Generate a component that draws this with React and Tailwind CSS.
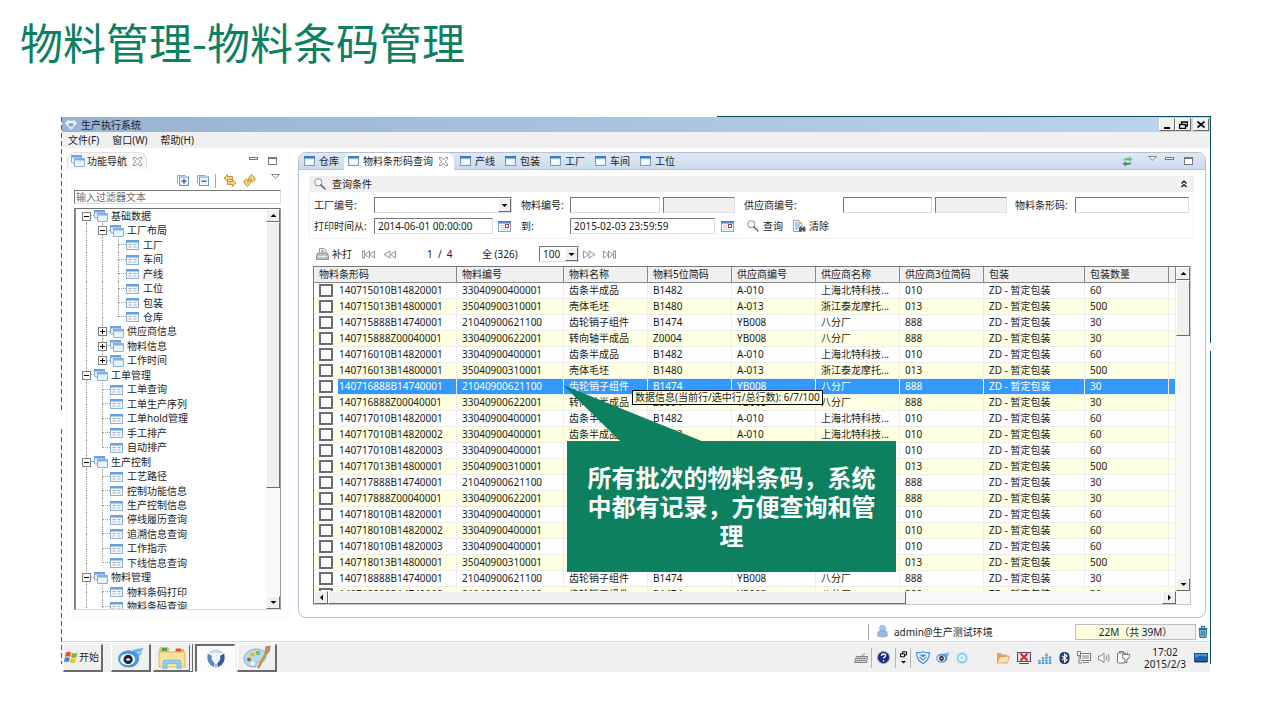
import React from "react";

const bevel =
  "border border-t-white border-l-white border-r-[#6b6b6b] border-b-[#6b6b6b] bg-[#f0f0f0]";
const sunken =
  "border border-t-[#777777] border-l-[#777777] border-r-[#dcdcdc] border-b-[#dcdcdc]";

/* ---------- icons ---------- */

const WindowIcon = () => (
  <svg width="11" height="10" viewBox="0 0 11 10" className="shrink-0">
    <rect x="0.5" y="0.5" width="10" height="9" fill="#e4f1fb" stroke="#7d9bbd" />
    <rect x="0" y="0" width="11" height="2.5" fill="#3f7ab8" />
    <rect x="2" y="4" width="7" height="4" fill="#f6fbff" />
  </svg>
);

const FolderIcon = () => (
  <svg width="14" height="12" viewBox="0 0 14 12" className="shrink-0">
    <rect x="0.5" y="0.5" width="10" height="7.5" rx="0.5" fill="#e6f1fb" stroke="#86afdb" />
    <rect x="0" y="0" width="11" height="2.5" fill="#6ea2dc" />
    <rect x="3.5" y="3.5" width="10" height="8" rx="0.5" fill="#eaf4fd" stroke="#86afdb" />
    <rect x="3" y="3" width="11" height="2.5" fill="#7fb0e6" />
  </svg>
);

const TableIcon = () => (
  <svg width="14" height="10" viewBox="0 0 14 10" className="shrink-0">
    <rect x="0.5" y="0.5" width="12" height="9" fill="#f4f8fc" stroke="#8fb1d8" />
    <rect x="0" y="0" width="13" height="2.5" fill="#68a0e0" />
    <path d="M2.5 4.5h3M7.5 4.5h3M2.5 7h3M7.5 7h3" stroke="#9fb0c3" strokeWidth="1.2" />
  </svg>
);

const CloseMark = () => (
  <svg width="9" height="9" viewBox="0 0 9 9">
    <path
      d="M0.5 0.5h2l2 2.3 2-2.3h2v1.6L6 4.5l2.5 2.4v1.6h-2l-2-2.3-2 2.3h-2V6.9L3 4.5 0.5 2.1z"
      fill="#ffffff"
      stroke="#777777"
      strokeWidth="0.8"
    />
  </svg>
);

const MinMark = () => (
  <svg width="9" height="4" viewBox="0 0 9 4">
    <rect x="0.5" y="0.5" width="8" height="2" fill="#fff" stroke="#777" />
  </svg>
);
const MaxMark = () => (
  <svg width="9" height="8" viewBox="0 0 9 8">
    <rect x="0.5" y="0.5" width="8" height="7" fill="#fff" stroke="#777" />
    <path d="M0 1.5h9" stroke="#777" />
  </svg>
);
const MenuMark = () => (
  <svg width="9" height="5" viewBox="0 0 9 5">
    <path d="M0.5 0.5h8L4.5 4.2z" fill="#fff" stroke="#777" strokeWidth="0.9" />
  </svg>
);

const ARROWS = {
  up: "M0.5 4h6L3.500 1z",
  down: "M0.5 1h6L3.500 4z",
  left: "M5 -0.500v6L2 2.500z",
  right: "M2 -0.500v6L5 2.500z",
};
const Arrow = ({ dir }) => (
  <svg width="7" height="5" viewBox="0 0 7 5" overflow="visible">
    <path d={ARROWS[dir]} fill="#000" />
  </svg>
);

const SearchIcon = () => (
  <svg width="12" height="12" viewBox="0 0 12 12" className="shrink-0">
    <circle cx="4.3" cy="4.3" r="3.5" fill="#f4f9fd" stroke="#959ba1" strokeWidth="1.1" />
    <path d="M7 7l4 4" stroke="#5c5c5c" strokeWidth="1.5" strokeLinecap="round" />
  </svg>
);

const CalendarIcon = () => (
  <svg width="13" height="11" viewBox="0 0 13 11">
    <rect x="0.5" y="0.5" width="12" height="10" fill="#f2f7fc" stroke="#87a5cb" />
    <rect x="0" y="0" width="13" height="2.5" fill="#4e86cc" />
    <path d="M2 4.5h4M2 6.500h4M2 8.500h8" stroke="#c4d4e6" strokeWidth="0.9" />
    <rect x="7.5" y="3.5" width="3" height="3" fill="#fff" stroke="#9c4a42" />
  </svg>
);

const ClearIcon = () => (
  <svg width="13" height="12" viewBox="0 0 13 12">
    <path d="M0.5 0.5h5.5l3 3v8H0.5z" fill="#f4f8fd" stroke="#8fa5c3" />
    <path d="M2 3h3M2 5h5M2 7h4M2 9h3" stroke="#6fa0d8" />
    <path d="M6 0.5v3h3" fill="#f2d27c" stroke="#c29a3c" strokeWidth="0.7" />
    <path d="M6 11.5V8l1-1.5h1.5V8h1.5V6.5h1.500l1 1.500v3.500h-2.500V10H9v1.500z" fill="#555" />
  </svg>
);

const PrinterIcon = () => (
  <svg width="13" height="12" viewBox="0 0 13 12">
    <path d="M3.5 5V0.5h5L10 2v3" fill="#f4f4f4" stroke="#9a9a9a" />
    <path d="M5 2.5h2.500M5 4h3" stroke="#9a9a9a" />
    <path d="M1.5 5h10l1 3.500v3H0.500v-3z" fill="#bdbdbd" stroke="#959595" />
    <path d="M2 8.500h9" stroke="#ececec" strokeWidth="1.2" />
  </svg>
);

const PagerIcon = ({ kind }) => {
  const flip = kind === "first" || kind === "prev";
  const end = kind === "first" || kind === "last";
  return (
    <svg width="13" height="9" viewBox="0 0 13 9">
      <g
        fill="#fff"
        stroke="#8a8a8a"
        strokeWidth="0.9"
        transform={flip ? "translate(13 0) scale(-1 1)" : undefined}
      >
        <path d="M0.5 1l5 3.5-5 3.5z" />
        <path d={end ? "M5.5 1l4.500 3.500-4.500 3.500z" : "M6 1l6 3.500-6 3.500z"} />
        {end && <rect x="10.5" y="1" width="2" height="7" />}
      </g>
    </svg>
  );
};

const PlusMinusIcon = ({ plus }) => (
  <svg width="12" height="11" viewBox="0 0 12 11">
    <path d="M0.5 8.5v-8h8" fill="none" stroke="#8aaedb" />
    <rect x="2.5" y="2" width="9" height="8.5" fill="#eef5fc" stroke="#6d97cc" />
    <path d={plus ? "M4.5 6.200h5M7 3.700v5" : "M4.5 6.200h5"} stroke="#28538e" strokeWidth="1.2" />
  </svg>
);

const SwapIcon = () => (
  <svg width="14" height="13" viewBox="0 0 14 13">
    <path d="M1 4l3.500-3.500v2h5v3h-5v2z" fill="#f7cf7a" stroke="#c98a2b" strokeWidth="0.9" />
    <path d="M13 9L9.500 5.500v2h-5v3h5v2z" fill="#f7cf7a" stroke="#c98a2b" strokeWidth="0.9" />
  </svg>
);
const LinkIcon = () => (
  <svg width="13" height="13" viewBox="0 0 13 13">
    <path
      d="M7 2l1.500-1.500L12 4v2L9.500 8 7.500 6.500l1-1.500L6.500 6.500 5 5z"
      fill="#f7cf7a"
      stroke="#c98a2b"
      strokeWidth="0.9"
    />
    <path
      d="M6 11l-1.500 1.500L1 9V7l2.500-2L5.500 6.500l-1 1.500L6.500 6.500 8 8z"
      fill="#f7cf7a"
      stroke="#c98a2b"
      strokeWidth="0.9"
    />
  </svg>
);

const RefreshIcon = () => (
  <svg width="11" height="11" viewBox="0 0 11 11">
    <path d="M1 4.5C2 2.500 4 2 7 2V0.500l3.500 2.800L7 6V4.300C4 4.300 2.500 4 1 4.500z" fill="#6dbb77" />
    <path d="M10 6.500C9 8.500 7 9 4 9v1.500L0.500 7.700 4 5.300V6.800c3 0 4.500 0.200 6-0.300z" fill="#3f9657" />
  </svg>
);

const BrandIcon = ({ size }) => (
  <svg width={size} height={size} viewBox="0 0 24 24">
    <path d="M4.500 5.500Q12 -0.500 19.500 5.500L16.500 7.500Q12 5 7.500 7.500z" fill="#cbd8ea" />
    <path d="M3 7l4.500 2.500Q6.500 14 10.500 17.500L10 22Q0.500 18 3 7z" fill="#5f88c0" />
    <path d="M21 7l-4.500 2.500Q17.500 14 13.500 17.500L14 22Q23.500 18 21 7z" fill="#2f5a9c" />
    <path d="M8 9.500Q12 6.500 16 9.500 16 14 12 16.500 8 14 8 9.500z" fill="#eef3fa" />
    <path d="M10.500 19Q12 18 13.500 19L12.500 22.500h-1z" fill="#8fabd2" />
  </svg>
);

const TitleLogo = () => (
  <svg width="12" height="10" viewBox="0 0 12 10">
    <path d="M2 0.500h8l2 3L6 10 0 3.500z" fill="#dfebf8" />
    <circle cx="6" cy="4.5" r="2.300" fill="#7fa8da" />
    <path d="M3 2.500h6" stroke="#fff" />
  </svg>
);

const WinFlag = () => (
  <svg width="14" height="13" viewBox="0 0 14 13">
    <path d="M2 1.5C4 0.500 5.500 0.800 7 1.600L6 6C4.500 5 3 5 1 6z" fill="#e0592a" />
    <path d="M7.8 1.800c2 1 3.500 1 5.700 0L12.300 6.200c-2 1-3.500 0.800-5.300 0z" fill="#83b536" />
    <path d="M0.8 6.800C2.500 6 4 6 5.800 6.900L4.800 11.200C3 10.300 1.500 10.500 0 11.200z" fill="#3b84cf" />
    <path d="M6.8 7.100c1.800 0.900 3.300 1 5.300 0.100L11 11.500c-2 1-3.500 0.800-5.200 0z" fill="#f2bd2c" />
  </svg>
);

const EyeIcon = ({ width, height }) => (
  <svg width={width} height={height} viewBox="0 0 28 22">
    <path d="M14 5.500Q17 1.500 27 1c-1 4-4 4.500-7 5 2 0.500 4 0 6-0.500-2 3.500-4 4.500-7 4z" fill="#6ab6ee" />
    <ellipse cx="11.5" cy="12.5" rx="11" ry="9" fill="#4596e6" />
    <ellipse cx="10.5" cy="13" rx="7.8" ry="6" fill="#f5faff" />
    <circle cx="11" cy="13" r="4.8" fill="#1e2733" />
    <ellipse cx="11" cy="13" rx="2.200" ry="1.300" fill="#dfe8f0" />
  </svg>
);

const ExplorerIcon = () => (
  <svg width="28" height="23" viewBox="0 0 28 23">
    <path d="M1 3l2-2h7l2 2h14v17H1z" fill="#e7bd5c" />
    <rect x="4" y="2" width="5" height="3" fill="#46a355" />
    <rect x="11" y="2.5" width="6" height="3" fill="#f4f4f4" />
    <rect x="18" y="2.5" width="5" height="3" fill="#cc5540" />
    <path d="M1 6h26v15H1z" fill="#f9e39c" stroke="#dcae4c" strokeWidth="0.8" />
    <path d="M5 22.5v-6q0-2.500 3-2.500h12q3 0 3 2.500v6h-4v-5H9v5z" fill="#8fd0f0" stroke="#6db2dc" strokeWidth="0.7" />
  </svg>
);

const PaintIcon = () => (
  <svg width="28" height="24" viewBox="0 0 28 24">
    <path
      d="M13 4C6 4 1 9 1 14c0 5 5 8 10 8 3 0 2-2 2.500-3.500 0.500-1.500 2-1.500 4.500-2 4-0.500 5-2.500 5-5C23 7 19 4 13 4z"
      fill="#b5d9f2"
      stroke="#6fa7d2"
      strokeWidth="0.9"
    />
    <circle cx="6" cy="14.5" r="2" fill="#a5672f" />
    <circle cx="9.5" cy="9.500" r="2.200" fill="#f0b23a" />
    <circle cx="15" cy="8" r="2.200" fill="#7cbf5c" />
    <circle cx="9.5" cy="18.5" r="1.700" fill="#fff" />
    <path d="M15.500 22L23.500 7.500" stroke="#cf8f3f" strokeWidth="2.600" strokeLinecap="round" />
    <path d="M21.500 7l1-5.500 5-1-0.500 5-2.500 3.500z" fill="#b38a5c" />
  </svg>
);

const KeyboardIcon = () => (
  <svg width="14" height="10" viewBox="0 0 14 10">
    <path d="M2.5 3.500h11l-1 6H0.500z" fill="#d0d0d0" stroke="#777" strokeWidth="0.9" />
    <path d="M3 5.500h9M2.700 7.500h9" stroke="#6b6b6b" strokeDasharray="1.500 0.700" />
    <path d="M8 3.500q0-2.500 3-2.500" fill="none" stroke="#888" />
  </svg>
);
const HelpIcon = () => (
  <svg width="13" height="13" viewBox="0 0 13 13">
    <circle cx="6.5" cy="6.5" r="6" fill="#1b2f86" stroke="#98a0c0" />
    <path d="M4.5 5q0-2 2-2t2 1.700q0 1-1.200 1.600-0.800 0.400-0.800 1.200" fill="none" stroke="#fff" strokeWidth="1.300" />
    <circle cx="6.5" cy="9.700" r="0.800" fill="#fff" />
  </svg>
);
const RestoreIcon = () => (
  <svg width="7" height="14" viewBox="0 0 7 14">
    <path d="M2.5 3V0.800H6.500v3.200H4.500M0.500 2.800h4v3h-4z" fill="none" stroke="#000" />
    <path d="M1 10h5L3.500 12.500z" fill="#000" />
  </svg>
);
const ShieldIcon = () => (
  <svg width="14" height="13" viewBox="0 0 14 13">
    <path d="M0.7 1.500Q4 2 7 0.700 10 2 13.300 1.500 13.500 9 7 12.500 0.500 9 0.700 1.500z" fill="#fff" stroke="#3a8fe2" strokeWidth="1.200" />
    <path d="M3 3.500h8l-4 3z" fill="#3a8fe2" />
    <path d="M3.5 6l3.500 3 3.500-3" fill="none" stroke="#3a8fe2" strokeWidth="1.300" />
  </svg>
);
const RingIcon = () => (
  <svg width="12" height="12" viewBox="0 0 12 12">
    <circle cx="6" cy="6" r="4.500" fill="#eaf7fe" stroke="#86cbf0" strokeWidth="2" />
    <circle cx="6" cy="6" r="1.500" fill="#9fd6f3" />
  </svg>
);
const SmallFolder = () => (
  <svg width="14" height="12" viewBox="0 0 14 12">
    <path d="M1 11V1h4l1 1.500h5V11z" fill="#d9a766" />
    <path d="M3.5 5L13.500 4l-2 7H1z" fill="#f7dfb4" stroke="#c18b3a" strokeWidth="0.600" />
  </svg>
);
const MonitorX = () => (
  <svg width="14" height="12" viewBox="0 0 14 12">
    <rect x="0.5" y="0.5" width="13" height="9" fill="#dfdfec" stroke="#4e4e78" />
    <path d="M2 11.500h10" stroke="#4e4e78" />
    <path d="M3.5 1.500l7 7M10.500 1.500l-7 7" stroke="#e0201c" strokeWidth="1.800" />
  </svg>
);
const BarsIcon = () => (
  <svg width="14" height="12" viewBox="0 0 14 12">
    <path
      d="M1.500 12V8M5 12V5M8.500 12V1M12 12V4"
      stroke="#4d97d2"
      strokeWidth="2.400"
      strokeDasharray="2 0.600"
    />
  </svg>
);
const BluetoothIcon = () => (
  <svg width="11" height="12" viewBox="0 0 11 12">
    <rect x="0.5" y="0" width="10" height="12" rx="4.500" fill="#1d3f75" />
    <path d="M3 3.800l5 4.200-2.500 2V2L8 4 3 8.200" fill="none" stroke="#fff" strokeWidth="1.100" />
  </svg>
);
const NetworkIcon = () => (
  <svg width="14" height="13" viewBox="0 0 14 13">
    <rect x="3.5" y="2.5" width="10" height="7" fill="#f5f5f5" stroke="#7b7b7b" />
    <path d="M5 5h7M5 7h7M6 11.500h6" stroke="#888" />
    <path d="M0.5 0.500h3v4h-3zM2 4.500V12h3" fill="#f5f5f5" stroke="#7b7b7b" />
  </svg>
);
const SpeakerIcon = () => (
  <svg width="12" height="12" viewBox="0 0 12 12">
    <path d="M0.5 4h2.500l3-3v10L3 8H0.500z" fill="#fff" stroke="#8a8a8a" />
    <path d="M8 3.500q1.500 2.500 0 5M10 2q2.500 4 0 8" fill="none" stroke="#8a8a8a" />
  </svg>
);
const PlugIcon = () => (
  <svg width="13" height="13" viewBox="0 0 13 13">
    <rect x="0.5" y="2" width="8" height="10" rx="1" fill="#fafafa" stroke="#777" />
    <path d="M2.5 2V0.500h4V2" fill="none" stroke="#777" />
    <path d="M5.500 3.500h7v2q0 2.500-2.500 2.500v3.500H8V8Q5.500 8 5.500 5.500z" fill="#fafafa" stroke="#777" />
    <path d="M7.5 3.500v-2M10.500 3.500v-2" stroke="#777" />
  </svg>
);
const DesktopIcon = () => (
  <svg width="14" height="10" viewBox="0 0 14 10">
    <rect x="0.5" y="0.5" width="13" height="8" fill="#4a96dc" stroke="#1d4f8c" />
    <path d="M1 5q5-4 12-1v4H1z" fill="#1f5ea8" />
    <rect x="1" y="8" width="12" height="1.500" fill="#20344f" />
  </svg>
);
const UserIcon = () => (
  <svg width="11" height="13" viewBox="0 0 11 13">
    <circle cx="5.5" cy="3.5" r="3" fill="#a9c9ec" stroke="#7fa4d0" strokeWidth="0.8" />
    <path d="M0.8 11V8.500q0-2.500 2.500-2.500h4.400q2.500 0 2.500 2.500V11q-4.500 2-9.400 0z" fill="#94baE6" stroke="#7fa4d0" strokeWidth="0.800" />
  </svg>
);
const TrashIcon = () => (
  <svg width="10" height="12" viewBox="0 0 10 12">
    <path d="M0.5 2.500h9M3.500 2V0.700h3V2" fill="none" stroke="#2f7396" strokeWidth="1.200" />
    <path d="M1.3 3.500h7.400l-0.600 8H1.900z" fill="#7db7d3" stroke="#2f7396" />
    <path d="M3.5 5v5M5 5v5M6.500 5v5" stroke="#2f7396" strokeWidth="0.800" />
  </svg>
);

/* ---------- data ---------- */

/* level, label, open state, guide flags: which ancestor lines continue below */
const TREE = [
  [0, "基础数据", "open", [1]],
  [1, "工厂布局", "open", [1, 1]],
  [2, "工厂", null, [1, 1, 1]],
  [2, "车间", null, [1, 1, 1]],
  [2, "产线", null, [1, 1, 1]],
  [2, "工位", null, [1, 1, 1]],
  [2, "包装", null, [1, 1, 1]],
  [2, "仓库", null, [1, 1, 0]],
  [1, "供应商信息", "closed", [1, 1]],
  [1, "物料信息", "closed", [1, 1]],
  [1, "工作时间", "closed", [1, 0]],
  [0, "工单管理", "open", [1]],
  [1, "工单查询", null, [1, 1]],
  [1, "工单生产序列", null, [1, 1]],
  [1, "工单hold管理", null, [1, 1]],
  [1, "手工排产", null, [1, 1]],
  [1, "自动排产", null, [1, 0]],
  [0, "生产控制", "open", [1]],
  [1, "工艺路径", null, [1, 1]],
  [1, "控制功能信息", null, [1, 1]],
  [1, "生产控制信息", null, [1, 1]],
  [1, "停线履历查询", null, [1, 1]],
  [1, "追溯信息查询", null, [1, 1]],
  [1, "工作指示", null, [1, 1]],
  [1, "下线信息查询", null, [1, 0]],
  [0, "物料管理", "open", [1]],
  [1, "物料条码打印", null, [1, 1]],
  [1, "物料条码查询", null, [1, 1]],
];

const PARTS = {
  rack: ["33040900400001", "齿条半成品", "B1482", "A-010", "上海北特科技...", "010", "60"],
  shell: ["35040900310001", "壳体毛坯", "B1480", "A-013", "浙江泰龙摩托...", "013", "500"],
  gear: ["21040900621100", "齿轮销子组件", "B1474", "YB008", "八分厂", "888", "30"],
  shaft: ["33040900622001", "转向轴半成品", "Z0004", "YB008", "八分厂", "888", "30"],
};
const ROWS = [
  ["140715010B14820001", "rack"],
  ["140715013B14800001", "shell"],
  ["140715888B14740001", "gear"],
  ["140715888Z00040001", "shaft"],
  ["140716010B14820001", "rack"],
  ["140716013B14800001", "shell"],
  ["140716888B14740001", "gear"],
  ["140716888Z00040001", "shaft"],
  ["140717010B14820001", "rack"],
  ["140717010B14820002", "rack"],
  ["140717010B14820003", "rack"],
  ["140717013B14800001", "shell"],
  ["140717888B14740001", "gear"],
  ["140717888Z00040001", "shaft"],
  ["140718010B14820001", "rack"],
  ["140718010B14820002", "rack"],
  ["140718010B14820003", "rack"],
  ["140718013B14800001", "shell"],
  ["140718888B14740001", "gear"],
  ["140718888B14740002", "gear"],
];
const SELECTED = 6;
const HEADERS = [
  "物料条形码",
  "物料编号",
  "物料名称",
  "物料5位简码",
  "供应商编号",
  "供应商名称",
  "供应商3位简码",
  "包装",
  "包装数量",
  "",
];

/* ---------- shared pieces ---------- */

function ScrollButton({ dir, label }) {
  return (
    <button
      aria-label={label}
      className={`flex h-[13px] w-[14px] shrink-0 items-center justify-center ${bevel}`}
    >
      <Arrow dir={dir} />
    </button>
  );
}

function Guide({ connector, below, above, children }) {
  return (
    <span className="relative grid w-4 shrink-0 grid-cols-2 grid-rows-2 self-stretch">
      <span />
      <span
        className={`border-dotted border-[#a0a0a0] ${above ? "border-l" : ""} ${connector ? "border-b" : ""}`}
      />
      <span />
      <span className={`border-dotted border-[#a0a0a0] ${below ? "border-l" : ""}`} />
      {children}
    </span>
  );
}

function TreeRow({ item, first }) {
  const [level, label, state, flags] = item;
  return (
    <li className="flex min-h-0 items-center whitespace-nowrap" role="treeitem">
      {flags.map((flag, i) => {
        const own = i === level;
        return (
          <Guide key={i} connector={own} below={flag} above={!first && (own || flag)}>
            {own && state && (
              <button
                aria-label={state === "open" ? "折叠" : "展开"}
                className="absolute inset-0 m-auto flex h-[9px] w-[9px] items-center justify-center border border-[#808080] bg-white"
              >
                <svg width="5" height="5" viewBox="0 0 5 5">
                  <path d={state === "open" ? "M0 2.5h5" : "M0 2.500h5M2.500 0v5"} stroke="#000" />
                </svg>
              </button>
            )}
          </Guide>
        );
      })}
      {state ? <FolderIcon /> : <TableIcon />}
      <span className={`ml-[2px] px-px leading-[13px] ${label === "产线" ? "bg-[#f0f0f0]" : ""}`}>
        {label}
      </span>
    </li>
  );
}

function Navigator() {
  return (
    <aside className="flex w-[224px] shrink-0 flex-col rounded-b-lg border-x border-b border-[#f7f7f7]">
      <div className="flex h-[17px] items-center justify-between">
        <div className="flex h-[17px] items-center gap-[2px] rounded-t-lg border border-b-0 border-[#e2e2e2] bg-[#f8f8f8] pr-1 pl-[3px]">
          <FolderIcon />
          <span>功能导航</span>
          <button aria-label="关闭功能导航" className="ml-1">
            <CloseMark />
          </button>
        </div>
        <div className="mr-3 flex items-center gap-[10px]">
          <button aria-label="最小化" className="pb-1">
            <MinMark />
          </button>
          <button aria-label="最大化">
            <MaxMark />
          </button>
        </div>
      </div>
      <div className="mt-1 mr-[9px] flex h-[15px] items-center justify-end">
        <button aria-label="全部展开" className="mr-2">
          <PlusMinusIcon plus />
        </button>
        <button aria-label="全部折叠" className="mr-[6px]">
          <PlusMinusIcon />
        </button>
        <span className="mr-[7px] h-[14px] w-px bg-[#a8a8a8]" />
        <button aria-label="交换" className="mr-[6px]">
          <SwapIcon />
        </button>
        <button aria-label="链接" className="mr-[15px]">
          <LinkIcon />
        </button>
        <button aria-label="视图菜单" className="self-start pt-px">
          <MenuMark />
        </button>
      </div>
      <input
        aria-label="输入过滤器文本"
        placeholder="输入过滤器文本"
        className={`mt-[2px] mr-2 ml-[7px] h-[14px] bg-white pl-px leading-3 placeholder:text-[#6b6b6b] ${sunken}`}
      />
      <div className="mt-[4px] mr-2 mb-[6px] ml-[7px] flex h-[402px] overflow-hidden border-t border-r border-b border-l-2 border-t-[#6f6f6f] border-r-[#9a9a9a] border-b-[#dcdcdc] border-l-[#858585]">
        <ul role="tree" className="grid h-[405px] flex-1 auto-rows-fr pl-[2px]">
          {TREE.map((item, i) => (
            <TreeRow key={i} item={item} first={i === 0} />
          ))}
        </ul>
        <div className="flex w-[14px] flex-col bg-[#f8f8f8]">
          <ScrollButton dir="up" label="向上滚动" />
          <div className={`h-[266px] ${bevel}`} />
          <div className="flex-1" />
          <ScrollButton dir="down" label="向下滚动" />
        </div>
      </div>
    </aside>
  );
}

function TextField({ label, className, ...rest }) {
  return (
    <input
      aria-label={label}
      className={`h-4 px-[3px] leading-[14px] ${sunken} ${className}`}
      {...rest}
    />
  );
}

function DropDown({ id, label, className, children }) {
  return (
    <span className={`relative flex h-4 shrink-0 ${className}`}>
      <select
        id={id}
        aria-label={label}
        className={`h-full w-full appearance-none bg-white pl-[3px] leading-[14px] ${sunken}`}
      >
        {children}
      </select>
      <span
        className={`pointer-events-none absolute inset-y-px right-px flex w-[13px] items-center justify-center ${bevel}`}
      >
        <Arrow dir="down" />
      </span>
    </span>
  );
}

function QueryPanel() {
  return (
    <section className="mt-[6px] mr-[11px] ml-[10px] border-x border-b border-[#f4f4f4]">
      <div className="flex h-4 items-center justify-between bg-[#f0f0f0] pr-[6px] pl-1">
        <h2 className="flex items-center gap-[6px]">
          <SearchIcon />
          查询条件
        </h2>
        <button aria-label="收起查询条件">
          <svg width="6" height="8" viewBox="0 0 6 8">
            <path d="M0.500 3.500L3 1l2.500 2.500M0.500 7L3 4.500 5.500 7" fill="none" stroke="#000" strokeWidth="1.100" />
          </svg>
        </button>
      </div>
      <form className="flex flex-col gap-[5px] pt-[5px] pr-1 pb-1 pl-1 whitespace-nowrap">
        <div className="flex items-center">
          <label htmlFor="plant" className="w-[60px] shrink-0">
            工厂编号:
          </label>
          <DropDown id="plant" className="w-[138px]">
            <option value="" />
          </DropDown>
          <label htmlFor="part" className="ml-[9px] w-[49px] shrink-0">
            物料编号:
          </label>
          <TextField id="part" className="w-[90px] bg-white" />
          <TextField label="物料名称" readOnly className="ml-[3px] w-[72px] bg-[#f0f0f0]" />
          <label htmlFor="vendor" className="ml-[9px] w-[99px] shrink-0">
            供应商编号:
          </label>
          <TextField id="vendor" className="w-[89px] bg-white" />
          <TextField label="供应商名称" readOnly className="ml-[3px] w-[72px] bg-[#f0f0f0]" />
          <label htmlFor="barcode" className="ml-2 w-[60px] shrink-0">
            物料条形码:
          </label>
          <TextField id="barcode" className="min-w-0 flex-1 bg-white" />
        </div>
        <div className="flex items-center">
          <label htmlFor="from" className="w-[60px] shrink-0">
            打印时间从:
          </label>
          <TextField id="from" defaultValue="2014-06-01 00:00:00" className="w-[119px] bg-white" />
          <button type="button" aria-label="选择开始日期" className="ml-[5px]">
            <CalendarIcon />
          </button>
          <label htmlFor="to" className="ml-[10px] w-[49px] shrink-0">
            到:
          </label>
          <TextField id="to" defaultValue="2015-02-03 23:59:59" className="w-[145px] bg-white" />
          <button type="button" aria-label="选择结束日期" className="ml-[6px]">
            <CalendarIcon />
          </button>
          <button type="button" className="ml-[13px] flex items-center gap-1">
            <SearchIcon />
            查询
          </button>
          <button type="button" className="ml-[10px] flex items-center gap-[3px]">
            <ClearIcon />
            清除
          </button>
        </div>
      </form>
    </section>
  );
}

function Pager() {
  return (
    <div className="mt-[7px] ml-[17px] flex h-4 items-center whitespace-nowrap">
      <button className="flex items-center gap-[3px]">
        <PrinterIcon />
        补打
      </button>
      <button aria-label="首页" className="ml-[10px]">
        <PagerIcon kind="first" />
      </button>
      <button aria-label="上一页" className="ml-2">
        <PagerIcon kind="prev" />
      </button>
      <span className="ml-[31px] w-[55px] whitespace-pre">1  /  4</span>
      <span className="w-[57px]">全 (326)</span>
      <DropDown label="每页行数" className="w-[40px]">
        <option>100</option>
      </DropDown>
      <button aria-label="下一页" className="ml-1">
        <PagerIcon kind="next" />
      </button>
      <button aria-label="末页" className="ml-[7px]">
        <PagerIcon kind="last" />
      </button>
    </div>
  );
}

function BarcodeTable() {
  return (
    <div className="mt-1 mr-[14px] mb-3 ml-[14px] border-t border-r border-b border-l border-t-[#777777] border-r-[#c8c8c8] border-b-[#c8c8c8] border-l-[#777777]">
      <div className="flex h-[324px]">
        <div className="min-w-0 flex-1 overflow-hidden">
          <table className="w-full table-fixed border-separate border-spacing-0 text-left whitespace-nowrap">
            <colgroup>
              <col className="w-[143px]" />
              <col className="w-[107px]" />
              <col className="w-[84px]" />
              <col className="w-[84px]" />
              <col className="w-[84px]" />
              <col className="w-[84px]" />
              <col className="w-[84px]" />
              <col className="w-[101px]" />
              <col className="w-[84px]" />
              <col />
            </colgroup>
            <thead>
              <tr>
                {HEADERS.map((h, i) => (
                  <th
                    key={i}
                    className="h-4 overflow-hidden border-r border-b border-[#888888] bg-[#f0f0f0] p-0 pl-[5px] leading-[15px] font-normal"
                  >
                    {h}
                  </th>
                ))}
              </tr>
            </thead>
            <tbody>
              {ROWS.map(([code, kind], r) => {
                const p = PARTS[kind];
                const cells = [p[0], p[1], p[2], p[3], p[4], p[5], "ZD - 暂定包装", p[6], ""];
                const selected = r === SELECTED;
                const tone = selected
                  ? "bg-[#3399ff] text-white"
                  : r % 2
                    ? "bg-[#ffffe1]"
                    : "bg-white";
                return (
                  <tr key={code} aria-selected={selected}>
                    <td className={`h-4 border-r border-b border-[#eeeeee] p-0 ${tone}`}>
                      <div className="flex h-[15px] items-center leading-[15px]">
                        <span
                          className={`flex h-[15px] w-6 shrink-0 items-center pl-[5px] ${selected ? "bg-white" : ""}`}
                        >
                          <input
                            type="checkbox"
                            aria-label={code}
                            className="h-[13px] w-[14px] appearance-none border-2 border-[#6a6a6a] bg-white"
                          />
                        </span>
                        <span className="pl-px">{code}</span>
                      </div>
                    </td>
                    {cells.map((c, i) => (
                      <td
                        key={i}
                        className={`h-4 border-r border-b border-[#eeeeee] p-0 pl-[5px] leading-[15px] ${tone}`}
                      >
                        {c}
                      </td>
                    ))}
                  </tr>
                );
              })}
            </tbody>
          </table>
        </div>
        <div className="flex w-[14px] flex-col bg-[#f8f8f8]">
          <ScrollButton dir="up" label="向上滚动" />
          <div className={`h-[56px] ${bevel}`} />
          <div className="flex-1" />
          <ScrollButton dir="down" label="向下滚动" />
        </div>
      </div>
      <div className="flex bg-[#f8f8f8] pr-[14px]">
        <ScrollButton dir="left" label="向左滚动" />
        <div className={`w-[67%] ${bevel}`} />
        <div className="flex-1" />
        <ScrollButton dir="right" label="向右滚动" />
      </div>
    </div>
  );
}

function EditorTabs() {
  const plain = "flex h-full items-center gap-1";
  return (
    <div className="flex h-[17px] items-center justify-between rounded-t-lg border-b border-[#b7c3dc] bg-linear-to-b from-[#dfe9f5] to-[#cbdbed]">
      <nav className="flex h-full items-center gap-[10px] pl-[5px] whitespace-nowrap">
        <button className={plain}>
          <WindowIcon />
          仓库
        </button>
        <div className="-ml-[5px] -mr-1 flex h-[17px] items-center gap-[6px] rounded-t-lg bg-white pr-[6px] pl-1">
          <button className="flex items-center gap-1">
            <WindowIcon />
            物料条形码查询
          </button>
          <button aria-label="关闭物料条形码查询">
            <CloseMark />
          </button>
        </div>
        {["产线", "包装", "工厂", "车间", "工位"].map((t) => (
          <button key={t} className={plain}>
            <WindowIcon />
            {t}
          </button>
        ))}
      </nav>
      <div className="mr-3 flex items-center">
        <button aria-label="刷新" className="mr-[15px]">
          <RefreshIcon />
        </button>
        <button aria-label="视图菜单" className="mr-2 pb-[6px]">
          <MenuMark />
        </button>
        <button aria-label="最小化" className="mr-[10px] pb-1">
          <MinMark />
        </button>
        <button aria-label="最大化">
          <MaxMark />
        </button>
      </div>
    </div>
  );
}

function StatusBar() {
  return (
    <div className="flex h-5 items-center justify-end border-b border-[#d5dbe3] pr-[2px]">
      <span className="mr-2 h-4 w-px bg-[#a8a8b0]" />
      <UserIcon />
      <span className="ml-[6px] w-[181px]">admin@生产测试环境</span>
      <div className="flex h-4 w-[121px] border border-[#bdbdbd] bg-linear-to-r from-[#ffffe1] from-55% to-[#f0f0f0] to-55%">
        <span className="w-full text-center leading-[14px]">22M（共 39M）</span>
      </div>
      <button aria-label="回收内存" className="ml-[2px]">
        <TrashIcon />
      </button>
    </div>
  );
}

function Taskbar() {
  const app = `flex h-[28px] w-10 items-center justify-center ${bevel} border-r-2 border-b-2`;
  const rule = "h-5 w-px bg-[#b4b4b4]";
  return (
    <footer className="flex h-[30px] items-center justify-between border-t border-[#f8fafc] bg-[#f0f0f0] pr-[2px] pl-px">
      <div className="flex items-center">
        <button className={`mr-2 flex h-[28px] w-10 items-center ${bevel} border-r-2 border-b-2 whitespace-nowrap`}>
          <WinFlag />
          <span className="ml-px">开始</span>
        </button>
        <div className="flex gap-[2px]">
          <button aria-label="浏览器" className={app}>
            <EyeIcon width={28} height={21} />
          </button>
          <button aria-label="资源管理器" className={`${app} border-r-4 [border-right-style:double]`}>
            <ExplorerIcon />
          </button>
          <button
            aria-label="生产执行系统"
            className="flex h-[28px] w-10 items-center justify-center border-t-2 border-r border-b border-l-2 border-t-[#6b6b6b] border-r-white border-b-white border-l-[#6b6b6b] bg-[#fbfbfb]"
          >
            <BrandIcon size={22} />
          </button>
          <button aria-label="画图" className={app}>
            <PaintIcon />
          </button>
        </div>
      </div>
      <div className="flex items-center">
        <KeyboardIcon />
        <span className={`ml-[3px] mr-[5px] ${rule}`} />
        <HelpIcon />
        <span className={`mr-1 ml-[5px] ${rule}`} />
        <RestoreIcon />
        <span className={`mr-[5px] ml-[3px] ${rule}`} />
        <div className="flex items-center gap-[6px]">
          <ShieldIcon />
          <EyeIcon width={14} height={11} />
          <RingIcon />
        </div>
        <div className="ml-7 flex items-center gap-[7px]">
          <SmallFolder />
          <MonitorX />
          <BarsIcon />
          <BluetoothIcon />
          <NetworkIcon />
          <SpeakerIcon />
          <PlugIcon />
        </div>
        <time className="ml-3 w-[46px] text-center leading-3">
          17:02
          <br />
          2015/2/3
        </time>
        <span className="ml-[6px]">
          <DesktopIcon />
        </span>
      </div>
    </footer>
  );
}

function Callout() {
  return (
    <div className="absolute top-[268px] left-[502px] w-[333px]">
      <svg width="142" height="57" viewBox="0 0 142 57" className="-mb-px">
        <path d="M0 0L141 57H58z" fill="#0d8060" />
      </svg>
      <p className="ml-1 flex h-[131px] items-center justify-center bg-[#0d8060] px-5 text-center text-[24px] leading-[29px] font-bold text-white">
        所有批次的物料条码，系统中都有记录，方便查询和管理
      </p>
    </div>
  );
}

export default function App() {
  return (
    <main
      lang="zh-CN"
      className="min-h-screen bg-white font-['Noto_Sans','Noto_Sans_CJK_SC',sans-serif] text-[10px] leading-4 text-[#1c1c1c]"
    >
      <h1 className="flex h-[116px] items-start pt-[14px] pl-5 font-['Noto_Sans_CJK_SC',sans-serif] text-[43px] leading-[54px] whitespace-nowrap text-[#0d8060]">
        物料管理-物料条码管理
      </h1>
      <div className="pr-[69px] pl-[61px]">
        <div className="ml-[57%] h-px bg-[#0f4a66]" />
        <div className="relative flex">
          <div className="flex w-px shrink-0 flex-col gap-4 pb-2">
            <span className="h-[296px] bg-[repeating-linear-gradient(to_bottom,#0d8060_0px,#0d8060_5px,transparent_5px,transparent_8px)]" />
            <span className="flex-1 bg-[repeating-linear-gradient(to_bottom,#0d8060_0px,#0d8060_5px,transparent_5px,transparent_8px)]" />
          </div>

          <div className="min-w-0 flex-1">
            <header className="flex h-[15px] items-center justify-between bg-linear-to-r from-[#98b3d3] to-[#bcd4ed] pr-px pl-[3px]">
              <div className="flex items-center gap-1">
                <TitleLogo />
                <span>生产执行系统</span>
              </div>
              <div className="flex">
                <button aria-label="最小化" className={`flex h-[13px] w-4 items-end justify-center pb-px ${bevel}`}>
                  <span className="mr-px h-[2px] w-[6px] bg-black" />
                </button>
                <button aria-label="还原" className={`flex h-[13px] w-4 items-center justify-center ${bevel}`}>
                  <svg width="9" height="8" viewBox="0 0 9 8">
                    <path d="M2.5 3V1h6v4H6.500" fill="none" stroke="#000" strokeWidth="1.300" />
                    <path d="M0.5 3.500h6v4h-6z" fill="none" stroke="#000" strokeWidth="1.300" />
                  </svg>
                </button>
                <button aria-label="关闭" className={`ml-[2px] flex h-[13px] w-4 items-center justify-center ${bevel}`}>
                  <svg width="8" height="7" viewBox="0 0 8 7">
                    <path d="M0.5 0.500l7 6M7.500 0.500l-7 6" stroke="#000" strokeWidth="1.600" />
                  </svg>
                </button>
              </div>
            </header>

            <nav className="flex h-4 items-center gap-[13px] bg-[#f0f0f0] pl-[6px] whitespace-nowrap">
              <button>文件(F)</button>
              <button>窗口(W)</button>
              <button>帮助(H)</button>
            </nav>

            <div className="flex gap-2 pt-1 pr-1 pb-1 pl-1">
              <Navigator />
              <section className="min-w-0 flex-1 rounded-lg border border-[#b9bfd3]">
                <EditorTabs />
                <QueryPanel />
                <Pager />
                <BarcodeTable />
              </section>
            </div>

            <StatusBar />
            <Taskbar />
          </div>

          <div className="flex w-px shrink-0 flex-col gap-2 pb-2">
            <span className="h-[226px] bg-[#0f4a66]" />
            <span className="flex-1 bg-[#0f4a66]" />
          </div>

          <div
            role="tooltip"
            className="absolute top-[273px] left-[571px] border border-black bg-[#ffffe1] px-[2px] leading-[13px] whitespace-nowrap"
          >
            数据信息(当前行/选中行/总行数): 6/7/100
          </div>
          <Callout />
        </div>
      </div>
    </main>
  );
}
